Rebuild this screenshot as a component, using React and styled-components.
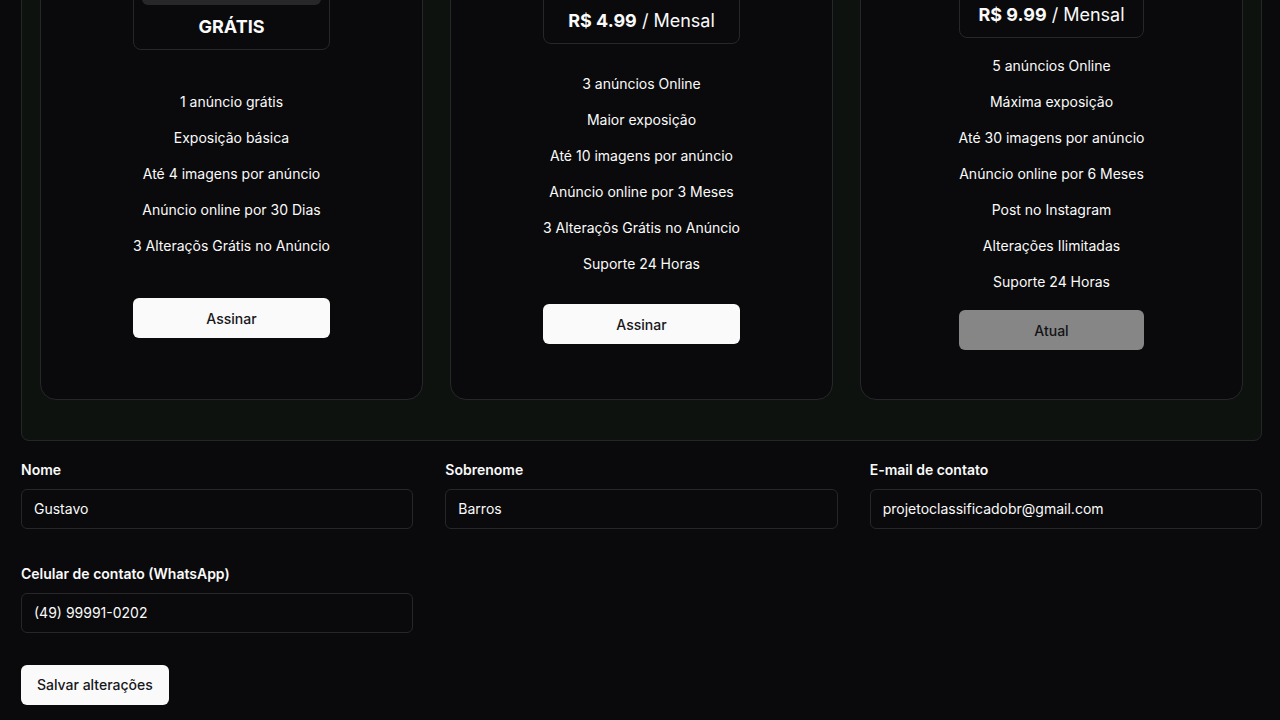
import React from "react";
import styled, { createGlobalStyle } from "styled-components";

const GlobalStyle = createGlobalStyle`
  * {
    box-sizing: border-box;
    margin: 0;
    padding: 0;
  }
  html, body {
    background: #0a0a0c;
    color: #fafafa;
    font-family: Inter, "Noto Sans", sans-serif;
    overflow: hidden;
  }
`;

// the screenshot is taken scrolled down, so the page is pulled up
const Page = styled.div`
  margin-top: -184px;
  padding: 0 18px 15px 21px;
`;

const PlansSection = styled.section`
  display: grid;
  grid-template-columns: repeat(3, 1fr);
  gap: 27px;
  padding: 18px 18px 40px;
  background: #0e120f;
  border: 1px solid #24272a;
  border-radius: 8px;
`;

const PlanCard = styled.div`
  display: flex;
  justify-content: center;
  padding: 48px 24px 49px;
  background: #0a0a0c;
  border: 1px solid #26272a;
  border-radius: 16px;
`;

const PlanInner = styled.div`
  display: flex;
  flex-direction: column;
  justify-content: space-around;
  width: fit-content;
`;

const PriceBox = styled.div`
  display: flex;
  flex-direction: column;
  align-items: center;
  gap: 8px;
  padding: 8px;
  border: 1px solid #27272a;
  border-radius: 8px;
`;

const PlanImage = styled.div`
  align-self: stretch;
  height: 100px;
  background: #27272a;
  border-radius: 6px;
`;

const Price = styled.p`
  font-size: 18px;
  line-height: 28px;
  font-weight: 400;
  white-space: nowrap;

  strong {
    font-weight: 700;
  }
`;

const Features = styled.ul`
  list-style: none;
  display: flex;
  flex-direction: column;
  gap: 16px;
  margin: 18px 0;
  text-align: center;
`;

const Feature = styled.li`
  font-size: 14px;
  line-height: 20px;
  white-space: nowrap;
`;

const PlanButton = styled.button`
  height: 40px;
  width: 100%;
  border: none;
  border-radius: 6px;
  font-family: inherit;
  font-size: 14px;
  font-weight: 500;
  background: ${(p) => (p.$current ? "#868687" : "#fafafa")};
  color: ${(p) => (p.$current ? "#141416" : "#18181b")};
  cursor: ${(p) => (p.$current ? "default" : "pointer")};
`;

const FormGrid = styled.div`
  display: grid;
  grid-template-columns: repeat(3, 1fr);
  column-gap: 32px;
  row-gap: 35px;
  margin-top: 19px;
`;

const Field = styled.div`
  display: flex;
  flex-direction: column;
`;

const Label = styled.label`
  font-size: 14px;
  line-height: 20px;
  font-weight: 600;
  margin-bottom: 9px;
`;

const Input = styled.input`
  height: 40px;
  padding: 0 12px 1px;
  background: transparent;
  border: 1px solid #27272a;
  border-radius: 6px;
  color: #fafafa;
  font-family: inherit;
  font-size: 14px;
  outline: none;
`;

const SaveButton = styled.button`
  margin-top: 32px;
  height: 40px;
  padding: 0 16px 1px;
  border: none;
  border-radius: 6px;
  background: #fafafa;
  color: #18181b;
  font-family: inherit;
  font-size: 14px;
  font-weight: 500;
`;

const plans = [
  {
    id: 1,
    price: null,
    features: [
      "1 anúncio grátis",
      "Exposição básica",
      "Até 4 imagens por anúncio",
      "Anúncio online por 30 Dias",
      "3 Alteraçõs Grátis no Anúncio"
    ]
  },
  {
    id: 2,
    price: "R$ 4.99",
    features: [
      "3 anúncios Online",
      "Maior exposição",
      "Até 10 imagens por anúncio",
      "Anúncio online por 3 Meses",
      "3 Alteraçõs Grátis no Anúncio",
      "Suporte 24 Horas"
    ]
  },
  {
    id: 3,
    price: "R$ 9.99",
    current: true,
    features: [
      "5 anúncios Online",
      "Máxima exposição",
      "Até 30 imagens por anúncio",
      "Anúncio online por 6 Meses",
      "Post no Instagram",
      "Alterações Ilimitadas",
      "Suporte 24 Horas"
    ]
  }
];

const fields = [
  { id: "nome", label: "Nome", value: "Gustavo" },
  { id: "sobrenome", label: "Sobrenome", value: "Barros" },
  { id: "email", label: "E-mail de contato", value: "projetoclassificadobr@gmail.com" },
  { id: "celular", label: "Celular de contato (WhatsApp)", value: "(49) 99991-0202" }
];

export default function App() {
  return (
    <Page>
      <GlobalStyle />
      <PlansSection>
        {plans.map((plan) => (
          <PlanCard key={plan.id}>
            <PlanInner>
              <PriceBox>
                <PlanImage />
                {plan.price ? (
                  <Price>
                    <strong>{plan.price}</strong> / Mensal
                  </Price>
                ) : (
                  <Price>
                    <strong>GRÁTIS</strong>
                  </Price>
                )}
              </PriceBox>
              <Features>
                {plan.features.map((f) => (
                  <Feature key={f}>{f}</Feature>
                ))}
              </Features>
              <PlanButton $current={plan.current}>
                {plan.current ? "Atual" : "Assinar"}
              </PlanButton>
            </PlanInner>
          </PlanCard>
        ))}
      </PlansSection>

      <FormGrid>
        {fields.map((f) => (
          <Field key={f.id}>
            <Label htmlFor={f.id}>{f.label}</Label>
            <Input id={f.id} defaultValue={f.value} />
          </Field>
        ))}
      </FormGrid>
      <SaveButton>Salvar alterações</SaveButton>
    </Page>
  );
}
